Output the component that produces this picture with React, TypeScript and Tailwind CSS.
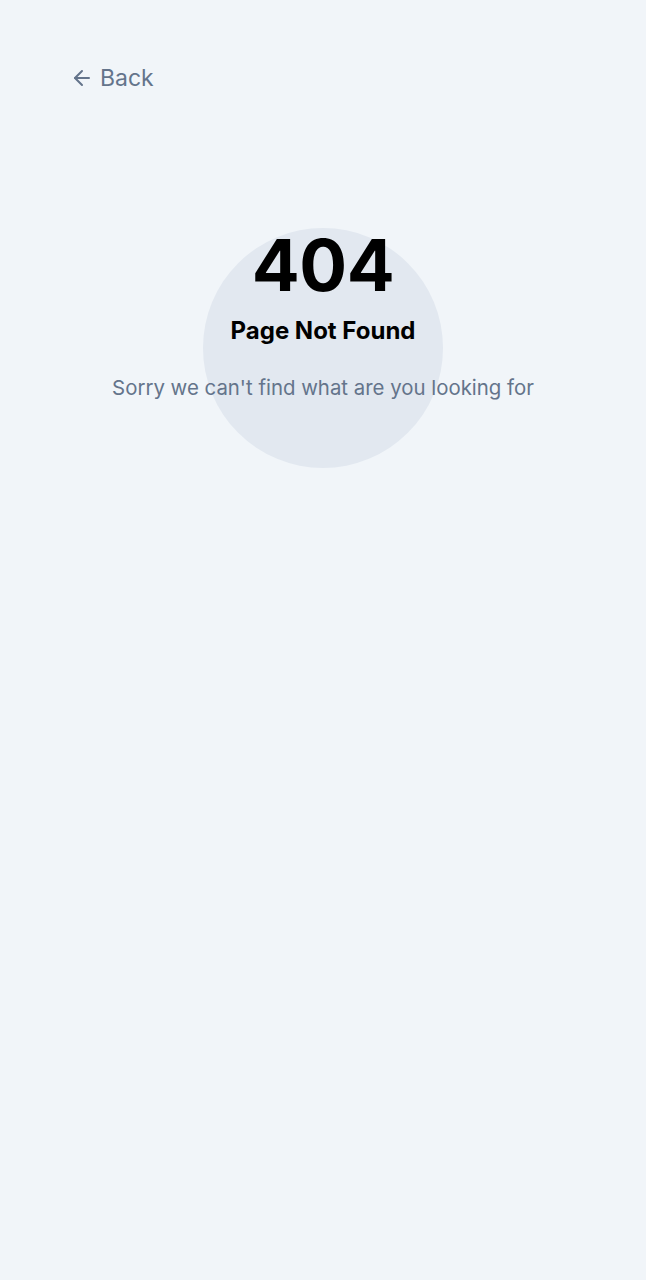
import React from 'react';
import { ArrowLeft } from 'lucide-react';

function NotFound() {
  return (
    <div className="min-h-screen bg-[#f1f5f9] font-['Inter',sans-serif]">
      <div className="px-[70px] pt-[62px]">
        <button className="flex items-center gap-[6px] text-[23px] leading-[32px] text-[#64748b]">
          <ArrowLeft className="w-[24px] h-[24px]" strokeWidth={2} />
          Back
        </button>
      </div>

      <div className="relative mt-[134px] flex flex-col items-center">
        {/* decorative circle behind the heading */}
        <div className="absolute top-[0px] left-1/2 -translate-x-1/2 w-[240px] h-[240px] rounded-full bg-[#e2e8f0]" />
        <h1 className="relative text-[71px] leading-[74px] font-bold tracking-[-0.5px] text-black">404</h1>
        <h2 className="relative mt-[13px] text-[24px] leading-[32px] font-bold text-black">Page Not Found</h2>
        <p className="relative mt-[27px] text-[20.4px] leading-[28px] text-[#64748b]">
          Sorry we can't find what are you looking for
        </p>
      </div>
    </div>
  );
}

export default function App() {
  return <NotFound />;
}
